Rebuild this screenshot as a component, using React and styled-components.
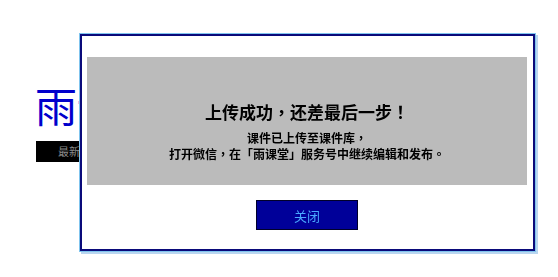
import React from "react";
import styled, { createGlobalStyle } from "styled-components";

const Global = createGlobalStyle`
  html, body { margin: 0; padding: 0; background: #ffffff; }
  body { font-family: "Noto Sans CJK SC", "Noto Sans", sans-serif; }
`;

const Page = styled.div`
  padding: 77px 0 0 35px;
  display: flex;
  flex-direction: column;
  align-items: flex-start;
`;

const Heading = styled.h1`
  margin: 0;
  font-size: 42px;
  line-height: 56px;
  font-weight: 400;
  color: #0000cc;
  font-family: "Noto Sans CJK SC", sans-serif;
`;

const DarkBar = styled.div`
  margin: 8px 0 0 1px;
  width: 110px;
  height: 21px;
  background: #000000;
  color: #8a8a8a;
  font-size: 11px;
  line-height: 21px;
  padding-left: 22px;
  box-sizing: border-box;
`;

const Modal = styled.div`
  position: fixed;
  left: 80px;
  top: 34px;
  width: 455px;
  height: 217px;
  box-sizing: border-box;
  background: #ffffff;
  border: 2px solid #0a0a7a;
  box-shadow: 0 0 0 1px #7fc4ee, 2px 2px 0 1px #b9d6f0;
  padding: 21px 6px 0 5px;
  display: flex;
  flex-direction: column;
  align-items: center;
`;

const Panel = styled.div`
  width: 440px;
  height: 128px;
  background: #bbbbbb;
  display: flex;
  flex-direction: column;
  align-items: center;
  padding-top: 43px;
  box-sizing: border-box;
  color: #000000;
  font-family: "Noto Sans CJK TC", "Noto Sans CJK SC", sans-serif;
`;

const Title = styled.div`
  font-size: 17px;
  line-height: 24px;
  font-weight: 700;
`;

const Line = styled.div`
  font-size: 12px;
  line-height: 16px;
  font-weight: 700;
  margin-top: ${(p) => p.$gap || 0}px;
`;

const CloseButton = styled.button`
  margin-top: 15px;
  width: 102px;
  height: 30px;
  background: #000099;
  border: 1px solid #00002a;
  color: #4aa8ff;
  font-size: 13px;
  font-family: "Noto Sans CJK SC", sans-serif;
  padding: 0;
  cursor: pointer;
`;

export default function App() {
  return (
    <>
      <Global />
      <Page>
        <Heading>雨课堂</Heading>
        <DarkBar>最新版本</DarkBar>
      </Page>
      <Modal>
        <Panel>
          <Title>上传成功，还差最后一步！</Title>
          <Line $gap={6}>课件已上传至课件库，</Line>
          <Line>打开微信，在「雨课堂」服务号中继续编辑和发布。</Line>
        </Panel>
        <CloseButton>关闭</CloseButton>
      </Modal>
    </>
  );
}
